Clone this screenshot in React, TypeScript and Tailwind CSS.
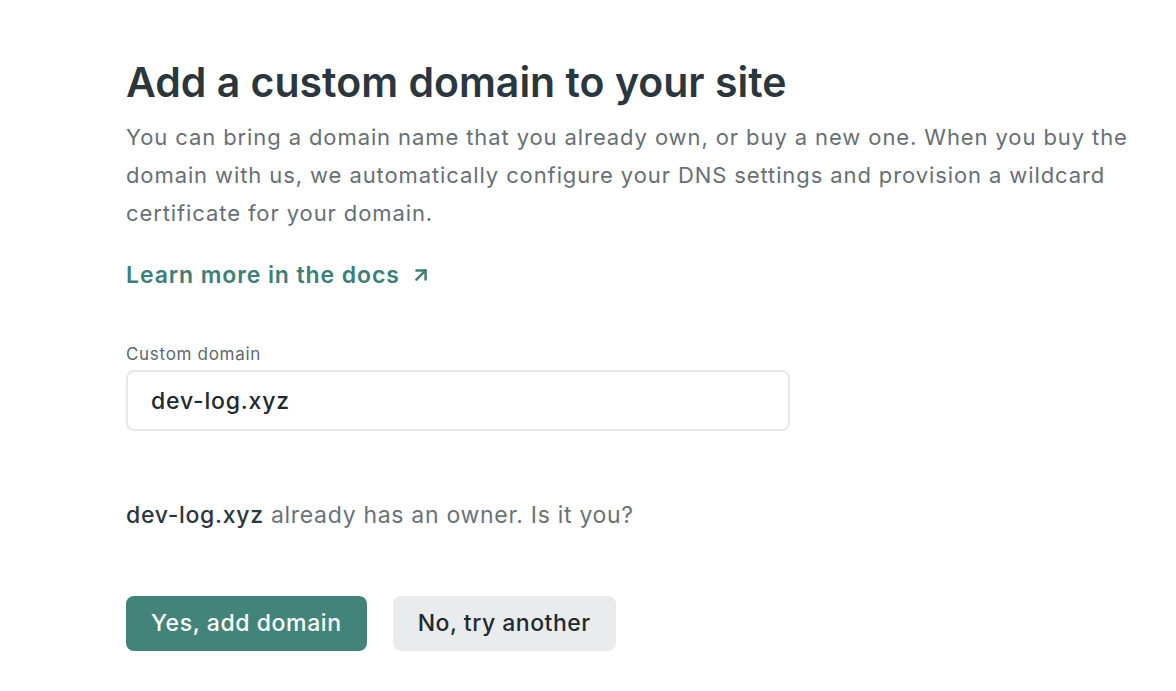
import { ArrowUpRight } from "lucide-react";

export default function App() {
  return (
    <div className="min-h-screen bg-white font-['Inter',sans-serif]">
      <div className="pl-[126px] pt-[56px]">
        <h1 className="text-[41px] leading-[52px] font-semibold text-[#2b373d]">
          Add a custom domain to your site
        </h1>
        <p className="mt-[10px] w-[1016px] text-[22px] leading-[38px] text-[#686f74] tracking-[0.9px]">
          You can bring a domain name that you already own, or buy a new one. When you buy the domain with us, we
          automatically configure your DNS settings and provision a wildcard certificate for your domain.
        </p>

        <a href="#" className="mt-[27px] inline-flex items-center gap-[10px] text-[23px] leading-[32px] font-semibold tracking-[0.9px] text-[#3c8077]">
          Learn more in the docs
          <ArrowUpRight className="w-[22px] h-[22px]" strokeWidth={2.75} />
        </a>

        <div className="mt-[52px] w-[664px]">
          <label className="block text-[17px] leading-[22px] tracking-[0.7px] text-[#5f676c]">Custom domain</label>
          <input
            type="text"
            defaultValue="dev-log.xyz"
            className="mt-[5px] w-full h-[61px] px-[23px] rounded-[8px] border-2 border-[#e6e8ea] text-[23px] font-medium tracking-[0.8px] text-[#1f2a30] focus:outline-none"
          />
        </div>

        <p className="mt-[68px] text-[23px] leading-[32px] tracking-[0.7px] text-[#6b7277]">
          <span className="font-medium text-[#2b373d]">dev-log.xyz</span> already has an owner. Is it you?
        </p>

        <div className="mt-[65px] flex gap-[26px]">
          <button className="h-[55px] px-[25px] rounded-[8px] bg-[#43847a] text-white text-[23px] font-medium tracking-[0.6px]">
            Yes, add domain
          </button>
          <button className="h-[55px] px-[25px] rounded-[8px] bg-[#e9ebed] text-[#1f2a30] text-[23px] font-medium tracking-[0.5px]">
            No, try another
          </button>
        </div>
      </div>
    </div>
  );
}
